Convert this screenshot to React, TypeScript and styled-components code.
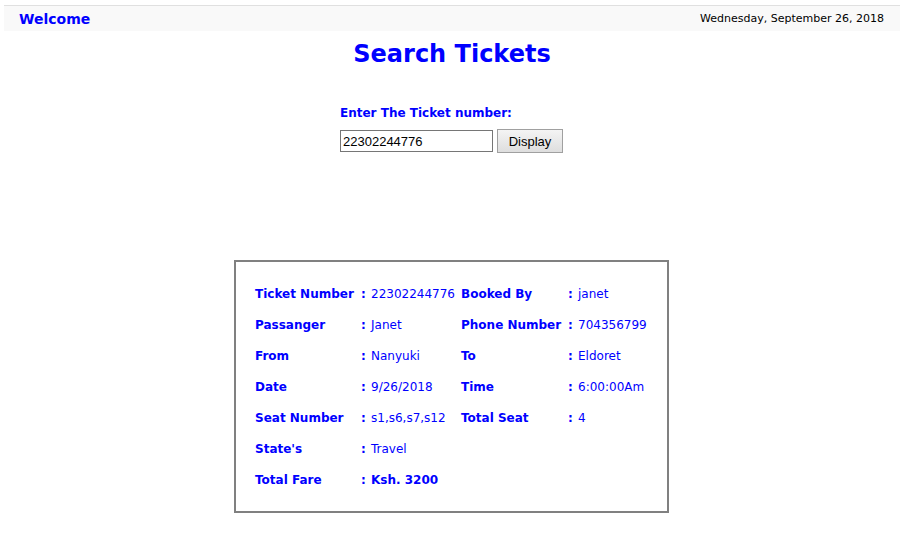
import React from "react";
import styled, { createGlobalStyle } from "styled-components";

const Global = createGlobalStyle`
  html, body { margin: 0; padding: 0; background: #fff; }
  body { font-family: "DejaVu Sans", Verdana, sans-serif; }
`;

const Page = styled.div`
  padding: 5px 5px 0 4px;
`;

const Header = styled.header`
  display: flex;
  justify-content: space-between;
  align-items: center;
  height: 25px;
  border-top: 1px solid #e0e0e0;
  background: #f9f9f9;
  padding: 0 16px 0 15px;
`;

const Welcome = styled.span`
  color: #0000ff;
  font-weight: bold;
  font-size: 14px;
`;

const DateText = styled.span`
  color: #000;
  font-size: 11px;
`;

const Title = styled.h1`
  margin: 8px 0 0;
  text-align: center;
  color: #0000ff;
  font-size: 24px;
  line-height: 30px;
  font-weight: bold;
`;

const SearchForm = styled.div`
  display: flex;
  flex-direction: column;
  width: 224px;
  margin: 36px auto 0;
`;

const Prompt = styled.label`
  color: #0000ff;
  font-weight: bold;
  font-size: 12px;
  line-height: 16px;
`;

const InputRow = styled.div`
  display: flex;
  align-items: center;
  gap: 4px;
  margin-top: 8px;
`;

const TextInput = styled.input`
  box-sizing: border-box;
  width: 153px;
  height: 22px;
  border: 1px solid #767676;
  padding: 1px 2px;
  font-family: "Liberation Sans", Arial, sans-serif;
  font-size: 13px;
  color: #000;
`;

const Button = styled.button`
  box-sizing: border-box;
  width: 66px;
  height: 24px;
  border: 1px solid #a0a0a0;
  background: linear-gradient(#f4f4f4, #dedede);
  font-family: "Liberation Sans", Arial, sans-serif;
  font-size: 13px;
  color: #000;
  padding: 0;
`;

const Box = styled.div`
  box-sizing: border-box;
  width: 435px;
  height: 253px;
  margin: 107px 0 0 230px;
  border: 2px solid #808080;
  padding: 16px 0 0 19px;
`;

const Grid = styled.div`
  display: grid;
  grid-template-columns: 106px 10px 90px 107px 10px auto;
  grid-auto-rows: 31px;
  align-items: center;
`;

const Label = styled.div`
  color: #0000ff;
  font-weight: bold;
  font-size: 12px;
  white-space: nowrap;
`;

const Colon = styled.div`
  color: #0000ff;
  font-weight: bold;
  font-size: 12px;
`;

const Value = styled.div<{ $bold?: boolean }>`
  color: #0000ff;
  font-size: 12px;
  font-weight: ${(p) => (p.$bold ? "bold" : "normal")};
  white-space: nowrap;
`;

const rows: [string, string, string?, string?][] = [
  ["Ticket Number", "22302244776", "Booked By", "janet"],
  ["Passanger", "Janet", "Phone Number", "704356799"],
  ["From", "Nanyuki", "To", "Eldoret"],
  ["Date", "9/26/2018", "Time", "6:00:00Am"],
  ["Seat Number", "s1,s6,s7,s12", "Total Seat", "4"],
  ["State's", "Travel"],
];

export default function App() {
  return (
    <Page>
      <Global />
      <Header>
        <Welcome>Welcome</Welcome>
        <DateText>Wednesday, September 26, 2018</DateText>
      </Header>
      <Title>Search Tickets</Title>
      <SearchForm>
        <Prompt>Enter The Ticket number:</Prompt>
        <InputRow>
          <TextInput defaultValue="22302244776" />
          <Button>Display</Button>
        </InputRow>
      </SearchForm>
      <Box>
        <Grid>
          {rows.map(([l1, v1, l2, v2]) => (
            <React.Fragment key={l1}>
              <Label>{l1}</Label>
              <Colon>:</Colon>
              <Value>{v1}</Value>
              {l2 ? (
                <>
                  <Label>{l2}</Label>
                  <Colon>:</Colon>
                  <Value>{v2}</Value>
                </>
              ) : (
                <>
                  <div />
                  <div />
                  <div />
                </>
              )}
            </React.Fragment>
          ))}
          <Label>Total Fare</Label>
          <Colon>:</Colon>
          <Value $bold>Ksh. 3200</Value>
        </Grid>
      </Box>
    </Page>
  );
}
